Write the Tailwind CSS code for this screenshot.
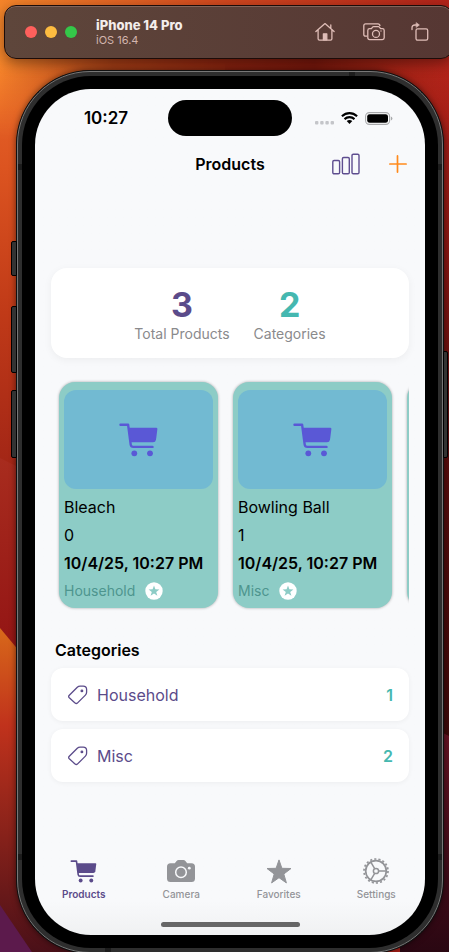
<!DOCTYPE html>
<html lang="en">
<head>
<meta charset="utf-8">
<meta name="viewport" content="width=device-width, initial-scale=1">
<title>Products</title>
<script src="https://cdn.jsdelivr.net/npm/@tailwindcss/browser@4"></script>
</head>
<body class="relative flex min-h-screen flex-col overflow-hidden bg-[#a81f18] font-['Inter','Liberation_Sans',sans-serif] text-black">

<!-- wallpaper -->
<svg class="absolute inset-0 -z-0 h-full w-full" viewBox="0 0 449 952" preserveAspectRatio="none" aria-hidden="true">
  <defs>
    <linearGradient id="top" x1="0" x2="1" y1="0" y2="0"><stop offset="0" stop-color="#f5852a"/><stop offset=".5" stop-color="#d2481f"/><stop offset="1" stop-color="#b3241a"/></linearGradient>
    <linearGradient id="left" x1="0" x2="0" y1="0" y2="1"><stop offset="0" stop-color="#f5852a"/><stop offset=".12" stop-color="#e8662a"/><stop offset=".35" stop-color="#dc5420"/><stop offset=".65" stop-color="#c03a18"/><stop offset="1" stop-color="#a02416"/></linearGradient>
    <linearGradient id="right" x1="0" x2="0" y1="0" y2="1"><stop offset="0" stop-color="#b3241a"/><stop offset=".3" stop-color="#8e1712"/><stop offset=".55" stop-color="#5c0c0c"/><stop offset="1" stop-color="#3a0808"/></linearGradient>
    <linearGradient id="red" x1="0" x2="0" y1="0" y2="1"><stop offset="0" stop-color="#a82c1e"/><stop offset="1" stop-color="#8e0f12"/></linearGradient>
    <linearGradient id="low" x1="0" x2="0" y1="0" y2="1"><stop offset="0" stop-color="#d8681a"/><stop offset=".3" stop-color="#c0321c"/><stop offset="1" stop-color="#4a1018"/></linearGradient>
    <linearGradient id="plum" x1="0" x2="0" y1="0" y2="1"><stop offset="0" stop-color="#6c1424"/><stop offset="1" stop-color="#2a0712"/></linearGradient>
    <linearGradient id="shade" x1="0" x2="1" y1="0" y2="0"><stop offset="0" stop-color="#400" stop-opacity="0"/><stop offset=".25" stop-color="#400" stop-opacity=".4"/><stop offset=".7" stop-color="#400" stop-opacity=".6"/><stop offset="1" stop-color="#400" stop-opacity="0"/></linearGradient>
    <linearGradient id="fade" x1="0" x2="0" y1="0" y2="1"><stop offset="0" stop-color="#fff"/><stop offset=".45" stop-color="#fff"/><stop offset="1" stop-color="#000"/></linearGradient>
    <mask id="fadeout" maskUnits="userSpaceOnUse" x="0" y="0" width="449" height="140"><path fill="url(#fade)" d="M0 0h449v140H0z"/></mask>
  </defs>
  <path fill="url(#left)" d="M0 0h225v480H0z"/>
  <path fill="url(#right)" d="M225 0h224v760H225z"/>
  <g mask="url(#fadeout)">
    <path fill="url(#top)" d="M0 0h449v140H0z"/>
    <path fill="url(#shade)" d="M0 58h449v82H0z"/>
  </g>
  <path fill="url(#red)" d="M0 458l40 20v220L0 640z"/>
  <path fill="url(#low)" d="M0 628l30 36 60 288H0z"/>
  <path fill="#5c1a4c" d="M0 905l34 50H0z"/>
  <path fill="url(#plum)" d="M400 712l49 24v216h-49z"/>
</svg>

<!-- simulator title bar -->
<header class="relative mt-[5px] -mr-1 ml-1 flex h-[54px] shrink-0 items-center rounded-xl border border-[#1c0c09] bg-linear-to-r from-[#5e463b] to-[#563733] pr-[23px] pl-5 inset-shadow-[0_1px_0_#80645a] shadow-[0_4px_14px_#0006]">
  <div class="flex gap-2">
    <button class="size-3 rounded-full bg-[#ff605c]" aria-label="Close"></button>
    <button class="size-3 rounded-full bg-[#fdbc40]" aria-label="Minimize"></button>
    <button class="size-3 rounded-full bg-[#34c749]" aria-label="Zoom"></button>
  </div>
  <div class="ml-[19px] flex-1">
    <p class="text-[13px] leading-4 font-extrabold text-[#f3edeb]">iPhone 14 Pro</p>
    <p class="text-[11px] leading-[14px] text-[#d3b5ae]">iOS 16.4</p>
  </div>
  <div class="flex items-center text-[#dfbdb7]">
    <button aria-label="Home"><svg class="h-5 w-5" viewBox="0 0 20 20" fill="none" stroke="currentColor" stroke-width="1.3" stroke-linecap="round" stroke-linejoin="round"><path d="M.9 9.6L10 1.6l9.1 8M15.8 6.4V2.9M3.1 8v8.700q0 1.400 1.400 1.400h11q1.400 0 1.400-1.400V8"/><path fill="currentColor" d="M8.400 17.800v-6h3.400v6z"/></svg></button>
    <button class="ml-7" aria-label="Screenshot"><svg class="h-5 w-[22px]" viewBox="0 0 22 20" fill="none" stroke="currentColor" stroke-width="1.3" stroke-linejoin="round"><path d="M4.300 14.200H2.600Q.8 14.200.8 12.400V3.700Q.8 1.900 2.600 1.900H15Q16.800 1.900 17 4"/><path d="M6.600 6.700h1.800l1.200-1.600q.4-.5 1-.5h4.800q.6 0 1 .5l1.200 1.600h1.800q1.800 0 1.800 1.800v7.300q0 1.800-1.800 1.800H6.600q-1.800 0-1.800-1.800V8.500q0-1.800 1.800-1.800z"/><circle cx="13" cy="11.900" r="3.500"/><circle cx="18" cy="9" r=".7" fill="currentColor" stroke="none"/></svg></button>
    <button class="ml-[26px]" aria-label="Rotate"><svg class="h-5 w-[18px]" viewBox="0 0 18 20" fill="none" stroke="currentColor" stroke-width="1.300" stroke-linecap="round" stroke-linejoin="round"><rect x="5" y="6.800" width="11.700" height="11.400" rx="1.600"/><path d="M1 7.500V6q0-3 3-3h2.500"/><path fill="currentColor" stroke-width=".6" d="M5.400.8L8.400 3 5.400 5.200z"/></svg></button>
  </div>
</header>

<!-- device -->
<div class="relative mt-[11px] mr-[5px] -mb-[2px] ml-4 flex flex-1 flex-col">
  <i class="absolute top-[171px] -left-[5px] h-[35px] w-[6px] rounded-l-[2px] border border-black bg-[#333]"></i>
  <i class="absolute top-[236px] -left-[5px] h-[67px] w-[6px] rounded-l-[2px] border border-black bg-[#333]"></i>
  <i class="absolute top-[320px] -left-[5px] h-[68px] w-[6px] rounded-l-[2px] border border-black bg-[#333]"></i>
  <i class="absolute top-[281px] -right-1 h-[107px] w-[5px] rounded-r-[2px] border border-black bg-[#333]"></i>

  <div class="flex flex-1 flex-col rounded-[74px] border border-[#111] bg-black shadow-[0_0_6px_#0008]">
  <div class="relative flex flex-1 flex-col rounded-[73px] border border-[#777] bg-[#2e2e2e] p-1">
    <i class="absolute top-[92px] left-0 h-[6px] w-1 bg-[#1c1c1c]"></i>
    <i class="absolute top-[92px] right-0 h-[6px] w-1 bg-[#1c1c1c]"></i>
    <i class="absolute top-0 right-[87px] h-1 w-[6px] bg-[#1c1c1c]"></i>
    <i class="absolute bottom-[92px] left-0 h-[6px] w-1 bg-[#1c1c1c]"></i>
    <i class="absolute right-0 bottom-[92px] h-[6px] w-1 bg-[#1c1c1c]"></i>
    <i class="absolute bottom-0 left-[87px] h-1 w-[6px] bg-[#1c1c1c]"></i>
  <div class="flex flex-1 flex-col rounded-[69px] bg-black p-[13px]">
  <div class="flex flex-1 flex-col overflow-hidden rounded-[56px] bg-[#f8f9fb] bg-linear-to-b from-[#f8f9fb] from-96% to-[#f0f1f2]">

    <!-- status bar -->
    <div class="grid grid-cols-[1fr_124px_1fr] items-center pt-[11px]">
      <time class="pl-[9px] text-center text-[17px] leading-5 font-semibold">10:27</time>
      <div class="h-9 rounded-full bg-black"></div>
      <div class="flex items-center pl-[23px]">
        <svg class="mt-[9px] h-1 w-[19px]" viewBox="0 0 19 4" fill="#c4c5c9"><rect width="3.400" height="3.600" rx="1"/><rect x="5.200" width="3.400" height="3.600" rx="1"/><rect x="10.400" width="3.400" height="3.600" rx="1"/><rect x="15.600" width="3.400" height="3.600" rx="1"/></svg>
        <svg class="ml-[7px] h-3 w-[17px]" viewBox="0 0 17 12" fill="none" stroke="#000" stroke-width="2.100"><path d="M.9 4.300Q4.300 1.100 8.500 1.100t7.600 3.200"/><path d="M3.500 7.100q2.200-2 5-2t5 2"/><path fill="#000" stroke="none" d="M8.500 11.900L5.700 9.100q1.300-1 2.800-1t2.800 1z"/></svg>
        <svg class="ml-[7px] h-[13px] w-7" viewBox="0 0 28 13"><rect x=".6" y=".6" width="24" height="11.800" rx="3.800" fill="#fff" stroke="#a8a9ab" stroke-width="1.100"/><rect x="2.200" y="2.200" width="20.800" height="8.600" rx="2.400"/><path fill="#a8a9ab" d="M25.900 4.600q1.500.5 1.500 1.900t-1.500 1.900z"/></svg>
      </div>
    </div>

    <!-- navigation bar -->
    <div class="mt-[6px] grid h-11 grid-cols-[1fr_auto_1fr] items-center px-[18px]">
      <span></span>
      <h1 class="text-base leading-5 font-semibold">Products</h1>
      <div class="flex items-center justify-end gap-[29px]">
        <button aria-label="Statistics"><svg class="h-[22px] w-[28px]" viewBox="0 0 28 22" fill="none" stroke="#5e4d8f" stroke-width="1.400"><rect x=".8" y="7.500" width="6.800" height="13.300" rx="1.300"/><rect x="10.400" y="4.500" width="6.900" height="16.300" rx="1.300"/><rect x="20" y="1.200" width="7" height="19.600" rx="1.300"/></svg></button>
        <button aria-label="Add product"><svg class="size-[18px]" viewBox="0 0 18 18" stroke="#ff8a1c" stroke-width="1.700" stroke-linecap="round"><path d="M8.500 .9v16.200M.9 9h16.200"/></svg></button>
      </div>
    </div>

    <main class="mt-[82px] flex flex-col px-4">
      <!-- totals -->
      <section class="flex h-[90px] justify-center gap-6 rounded-2xl bg-white pt-[17px] text-center shadow-[0_2px_8px_#0000000d]">
        <div><p class="text-[34px] leading-10 font-bold text-[#5b4b8a]">3</p><p class="text-sm leading-[18px] text-[#8a8a8c]">Total Products</p></div>
        <div><p class="text-[34px] leading-10 font-bold text-[#45b8b0]">2</p><p class="text-sm leading-[18px] text-[#8a8a8c]">Categories</p></div>
      </section>

      <!-- product carousel -->
      <section class="mt-4 flex gap-[15px] overflow-hidden py-2 pl-2" aria-label="Products">
        <article class="h-[226px] w-[159px] shrink-0 rounded-2xl bg-[#8dccc6] p-[5px] pt-2 shadow-[0_0_3px_#0005]">
          <div class="flex h-[99px] items-center justify-center rounded-xl bg-[#72bad2]"><svg class="h-[34px] w-[39px]" viewBox="0 0 39 34" fill="#5a58d6"><path fill="none" stroke="#5a58d6" stroke-width="2.400" stroke-linecap="round" stroke-linejoin="round" d="M1.500 1.700h7.600L11.700 21.600q.4 2.300 2.600 2.300H33.500"/><path d="M9.800 4.700H37.200q1.300 0 1.200 1.300L37 16.700q-.4 2.500-3 2.600L11.400 19.300z"/><circle cx="15.300" cy="30.300" r="2.900"/><circle cx="31" cy="30.300" r="2.900"/></svg></div>
          <div class="mt-1 text-base leading-7">
            <h2>Bleach</h2>
            <p>0</p>
            <p class="font-semibold whitespace-nowrap">10/4/25, 10:27 PM</p>
          </div>
          <div class="flex h-7 items-center gap-[10px] text-sm text-[#4d958e]"><span>Household</span><button aria-label="Favorite Bleach"><svg class="size-[18px]" viewBox="0 0 18 18"><circle cx="9" cy="9" r="8.700" fill="#fff"/><path fill="#8dccc6" d="M9 3.500l1.400 3.800 4 .1-3.200 2.500 1.200 3.900L9 11.500l-3.400 2.300 1.200-3.900-3.200-2.500 4-.1z"/></svg></button></div>
        </article>
        <article class="h-[226px] w-[159px] shrink-0 rounded-2xl bg-[#8dccc6] p-[5px] pt-2 shadow-[0_0_3px_#0005]">
          <div class="flex h-[99px] items-center justify-center rounded-xl bg-[#72bad2]"><svg class="h-[34px] w-[39px]" viewBox="0 0 39 34" fill="#5a58d6"><path fill="none" stroke="#5a58d6" stroke-width="2.400" stroke-linecap="round" stroke-linejoin="round" d="M1.500 1.700h7.600L11.700 21.600q.4 2.300 2.600 2.300H33.500"/><path d="M9.800 4.700H37.200q1.300 0 1.200 1.300L37 16.700q-.4 2.500-3 2.600L11.400 19.300z"/><circle cx="15.300" cy="30.300" r="2.900"/><circle cx="31" cy="30.300" r="2.900"/></svg></div>
          <div class="mt-1 text-base leading-7">
            <h2>Bowling Ball</h2>
            <p>1</p>
            <p class="font-semibold whitespace-nowrap">10/4/25, 10:27 PM</p>
          </div>
          <div class="flex h-7 items-center gap-[10px] text-sm text-[#4d958e]"><span>Misc</span><button aria-label="Favorite Bowling Ball"><svg class="size-[18px]" viewBox="0 0 18 18"><circle cx="9" cy="9" r="8.700" fill="#fff"/><path fill="#8dccc6" d="M9 3.500l1.400 3.800 4 .1-3.200 2.500 1.200 3.900L9 11.500l-3.400 2.300 1.200-3.900-3.200-2.500 4-.1z"/></svg></button></div>
        </article>
        <article class="h-[226px] w-[159px] shrink-0 rounded-2xl bg-[#8dccc6] shadow-[0_0_3px_#0005]"></article>
      </section>

      <!-- categories -->
      <section class="mt-6">
        <h2 class="pl-1 text-base leading-5 font-semibold">Categories</h2>
        <div class="mt-2 flex flex-col gap-2">
          <a href="#household" class="flex h-[53px] items-center rounded-xl bg-white px-4 text-base text-[#5b4b8a] shadow-[0_1px_5px_#0000000d]"><svg class="mr-[9px] h-5 w-[21px]" viewBox="0 0 21 20" fill="none" stroke="#5b4b8a" stroke-width="1.300" stroke-linejoin="round"><path d="M2.300 10.200L10.300 2.300Q11.500 1.200 13.100 1.200H16.200Q19.600 1.200 19.600 4.500V7.300q0 1.600-1.200 2.800l-7.800 7.800q-1.300 1.300-2.600 0L2.300 12.800q-1.300-1.300 0-2.600z"/><circle cx="14.900" cy="5.900" r=".8"/></svg>Household<span class="ml-auto font-semibold text-[#45b8b0]">1</span></a>
          <a href="#misc" class="flex h-[53px] items-center rounded-xl bg-white px-4 text-base text-[#5b4b8a] shadow-[0_1px_5px_#0000000d]"><svg class="mr-[9px] h-5 w-[21px]" viewBox="0 0 21 20" fill="none" stroke="#5b4b8a" stroke-width="1.300" stroke-linejoin="round"><path d="M2.300 10.200L10.300 2.300Q11.500 1.200 13.100 1.200H16.200Q19.600 1.200 19.600 4.500V7.300q0 1.600-1.200 2.800l-7.800 7.800q-1.300 1.300-2.600 0L2.300 12.800q-1.300-1.300 0-2.600z"/><circle cx="14.900" cy="5.900" r=".8"/></svg>Misc<span class="ml-auto font-semibold text-[#45b8b0]">2</span></a>
        </div>
      </section>
    </main>

    <!-- tab bar -->
    <nav class="mt-auto grid grid-cols-4 text-center text-[10px] leading-3 font-medium text-[#939498]">
      <a href="#products" class="flex flex-col items-center gap-[3px] font-semibold text-[#5b4b8a]"><span class="flex h-7 items-center"><svg class="h-[23px] w-[27px]" viewBox="0 0 39 34" fill="currentColor"><path fill="none" stroke="currentColor" stroke-width="2.400" stroke-linecap="round" stroke-linejoin="round" d="M1.500 1.700h7.600L11.700 21.600q.4 2.300 2.600 2.300H33.500"/><path d="M9.800 4.700H37.200q1.300 0 1.200 1.300L37 16.700q-.4 2.500-3 2.600L11.400 19.300z"/><circle cx="15.300" cy="30.300" r="2.900"/><circle cx="31" cy="30.300" r="2.900"/></svg></span>Products</a>
      <a href="#camera" class="flex flex-col items-center gap-[3px]"><span class="flex h-7 items-center"><svg class="h-[22px] w-7" viewBox="0 0 28 22"><path fill="currentColor" d="M3.500 3.200h4.300L9.600 1q.8-.9 2-.9h4.800q1.200 0 2 .9l1.800 2.200h4.300q3.500 0 3.500 3.500v11.800q0 3.500-3.500 3.500h-21Q0 22 0 18.500V6.700q0-3.500 3.500-3.500z"/><circle cx="14" cy="12.200" r="5.300" fill="none" stroke="#f8f9fb" stroke-width="1.500"/><circle cx="22.300" cy="8.200" r="1.400" fill="#f8f9fb"/></svg></span>Camera</a>
      <a href="#favorites" class="flex flex-col items-center gap-[3px]"><span class="flex h-7 items-center"><svg class="h-[25px] w-[26px]" viewBox="0 0 26 25" fill="currentColor" stroke="currentColor" stroke-width="1" stroke-linejoin="round"><path d="M13 .9l2.900 8.400 9.100.2-7.200 5.500 2.600 8.900L13 18.700l-7.400 5.200L8.200 15 1 9.500l9.100-.2z"/></svg></span>Favorites</a>
      <a href="#settings" class="flex flex-col items-center gap-[3px]"><span class="flex h-7 items-center"><svg class="size-[26px]" viewBox="0 0 26 26" fill="none" stroke="currentColor"><circle cx="13" cy="13" r="10.300" stroke-width="1.700"/><circle cx="13" cy="13" r="12" stroke-width="1.700" stroke-dasharray="2.100 2.088"/><circle cx="13" cy="13" r="2.600" stroke-width="1.500"/><path stroke-width="1.500" d="M15.600 13h7.700M11.700 10.700L7.800 4.100M11.700 15.300l-3.900 6.600"/></svg></span>Settings</a>
    </nav>
    <div class="mx-auto mt-[22px] mb-2 h-[5px] w-[139px] rounded-full bg-[#666]"></div>
  </div>
  </div>
  </div>
  </div>
</div>
</body>
</html>
